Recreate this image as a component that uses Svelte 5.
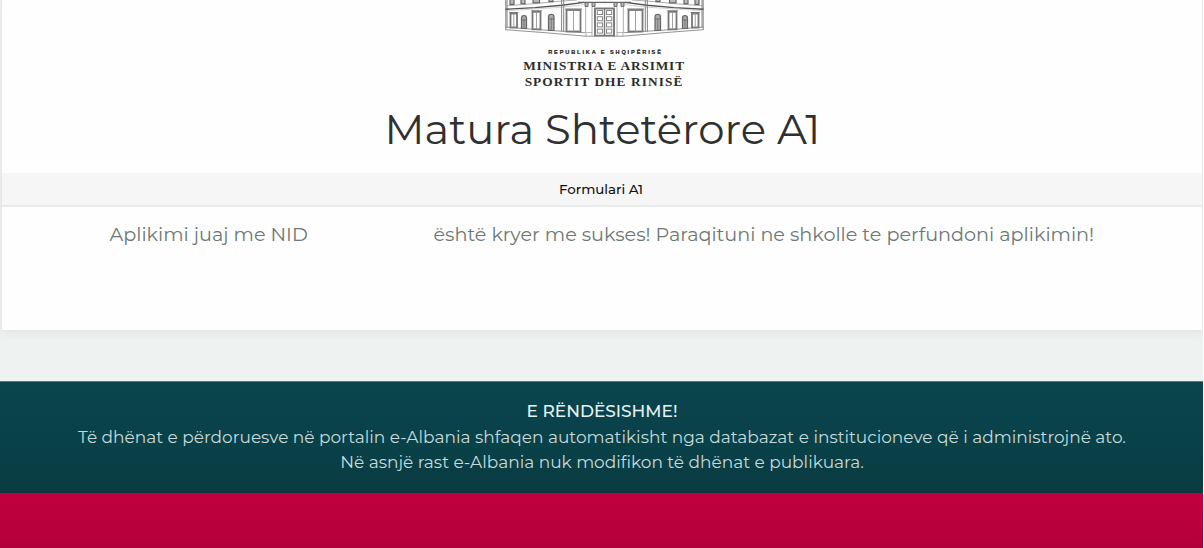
<script>
  // One wing of the facade; the other is its mirror image.
  const windows = [
    { x: 5.5, y: 13.5, w: 6.5, h: 14 },
    { x: 27.5, y: 11.8, w: 8, h: 17.5 },
    { x: 61.5, y: 10, w: 14, h: 21.5 }
  ];
  const arches = [
    { x: 16.5, y: 16, w: 5, b: 28.5 },
    { x: 43.5, y: 15, w: 5.5, b: 30.5 }
  ];
  const upper = [
    { x: 5, w: 4, h: 4.4 },
    { x: 16, w: 4, h: 3.7 },
    { x: 28, w: 6.5, h: 2.8 },
    { x: 44, w: 4, h: 1.6 }
  ];
  const panels = [10.5, 16.7, 22.9, 29.1];
</script>

<div class="page">
  <main class="card">
    <header>
      <svg class="crest" width="200" height="40" viewBox="0 0 200 40" fill="none">
        <defs>
          <g id="wing">
            <path d="M.8 0V30M2 0V28" stroke="#777" stroke-width=".9" />
            <path d="M.5 5.9 30 3.6 57 1 72 0" stroke="#999" stroke-width=".8" />
            <path d="M.5 9.3 30 7.6 57 5.2 79 2.4" stroke="#555" stroke-width="1.4" />
            <path d="M.5 10.8 57 7.2 79 4.7" stroke="#bbb" stroke-width=".6" />
            <path d="M.5 27 35 29.8 80 32.7M.5 29.7 40 32.7 81 36.2H90" stroke="#888" stroke-width=".9" />
            <path d="M56.6 0V31.5M58.7 0V31.5" stroke="#777" stroke-width=".9" />
            {#each windows as w}
              <rect x={w.x} y={w.y} width={w.w} height={w.h} stroke="#777" stroke-width="1.8" />
              <path d="M{w.x + w.w / 2} {w.y}v{w.h}" stroke="#999" stroke-width=".9" />
              <path d="M{w.x - 1.3} {w.y - 1}h{w.w + 2.6}" stroke="#777" stroke-width="1" />
            {/each}
            {#each arches as a}
              <path
                d="M{a.x} {a.b}V{a.y + 2}a{a.w / 2} {a.w / 2} 0 0 1 {a.w} 0V{a.b}z"
                fill="#aaa" stroke="#666" stroke-width="1.2" />
              <path d="M{a.x + a.w / 2} {a.y + 3}V{a.b}M{a.x} {a.y + 4}h{a.w}" stroke="#666" stroke-width=".7" />
            {/each}
            {#each upper as u}
              <rect x={u.x} y="-2" width={u.w} height={u.h + 2} fill="#bbb" stroke="#666" stroke-width="1.2" />
            {/each}
            <path d="M73 2.4H100" stroke="#666" stroke-width="1.3" />
            <path d="M80 3v3.4h3V3M87 3v3.4h3V3" fill="#bbb" stroke="#666" stroke-width="1" />
            <path d="M80.7 7V33M87 7V36" stroke="#999" stroke-width=".8" />
            <path d="M81 36.3V32.5H87" stroke="#999" stroke-width=".7" />
          </g>
        </defs>
        <use href="#wing" />
        <use href="#wing" transform="translate(199 0) scale(-1 1)" />
        <rect x="90" y="8.5" width="19" height="27.2" fill="#fff" stroke="#777" stroke-width="1.9" />
        <path d="M99.5 9V35.5" stroke="#777" stroke-width="1.4" />
        {#each panels as y}
          <rect x="92.3" y={y} width="5.2" height="4" stroke="#888" stroke-width="1" />
          <rect x="101.5" y={y} width="5.2" height="4" stroke="#888" stroke-width="1" />
        {/each}
      </svg>
      <div class="republic">REPUBLIKA E SHQIPËRISË</div>
      <div class="ministry m1">MINISTRIA E ARSIMIT</div>
      <div class="ministry m2">SPORTIT DHE RINISË</div>
      <h1>Matura Shtetërore A1</h1>
    </header>
    <div class="bar">Formulari A1</div>
    <p class="message"><span class="a">Aplikimi juaj me NID</span><span>është kryer me sukses! Paraqituni ne shkolle te perfundoni aplikimin!</span></p>
  </main>
  <section class="notice">
    <strong>E RËNDËSISHME!</strong>
    <p>Të dhënat e përdoruesve në portalin e-Albania shfaqen automatikisht nga databazat e institucioneve që i administrojnë ato.</p>
    <p>Në asnjë rast e-Albania nuk modifikon të dhënat e publikuara.</p>
  </section>
  <footer></footer>
</div>

<style>
  :global(body) { background: #fff; overflow: hidden; }
  .page {
    width: 1203px;
    height: 548px;
    display: flex;
    flex-direction: column;
    overflow: hidden;
    background: #eef3f2;
    font-family: Montserrat, Inter, sans-serif;
    white-space: nowrap;
  }
  .card {
    box-sizing: border-box;
    height: 331px;
    margin: 0 0 50px 1px;
    flex: none;
    border: 1px solid #e6e8e8;
    border-top: 0;
    background: #fefefe;
    box-shadow: 0 3px 10px rgba(0, 0, 0, .05);
  }
  header {
    height: 173px;
    display: flex;
    flex-direction: column;
    align-items: center;
    color: #222;
  }
  .crest { display: block; flex: none; margin: 0 0 0 5px; }
  .republic {
    margin-top: 8px;
    height: 9px;
    font: 700 5.6px/9px "Liberation Sans", sans-serif;
    letter-spacing: 1.87px;
    padding-left: 7px;
    color: #222;
    -webkit-text-stroke: .2px #222;
  }
  .ministry {
    height: 16px;
    font: 700 13.3px/18px "Liberation Serif", serif;
    color: #2c2c2c;
    padding-left: 4px;
  }
  .m1 { letter-spacing: .85px; }
  .m2 { letter-spacing: 1.1px; }
  h1 {
    margin: 15px 0 0;
    padding-left: 1px;
    font-size: 41.85px;
    line-height: 50px;
    font-weight: 400;
    color: #303030;
  }
  .bar {
    box-sizing: border-box;
    height: 34px;
    line-height: 32px;
    padding-right: 2px;
    background: #f6f6f6;
    border-bottom: 2px solid #e9eaea;
    text-align: center;
    font-size: 13.4px;
    font-weight: 500;
    color: #111;
  }
  .message {
    display: flex;
    margin: 14px 0 0 107.5px;
    font-size: 19.2px;
    line-height: 26px;
    font-weight: 400;
    color: #6c7875;
  }
  .a { width: 324px; }
  .notice {
    box-sizing: border-box;
    height: 112px;
    flex: none;
    padding: 17px 0 0 1px;
    border-top: 1px solid #4f7c80;
    display: flex;
    flex-direction: column;
    align-items: center;
    background: linear-gradient(#0a444c, #094149 60%, #0a3a40);
    color: #c6dadb;
    font-size: 16.97px;
    line-height: 25.5px;
    font-weight: 400;
  }
  .notice strong { font-size: 16.97px; font-weight: 500; color: #e6f2f2; }
  .notice p { margin: 0; }
  footer { flex: 1; background: linear-gradient(#c2003f, #b1003a); }
</style>
